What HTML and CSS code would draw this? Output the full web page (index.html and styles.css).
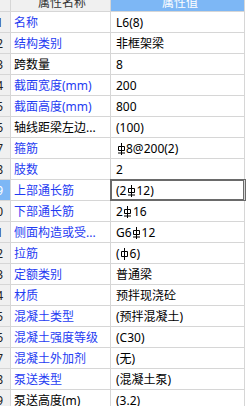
FILE: index.html
```html
<!DOCTYPE html>
<html lang="zh-CN">
<head>
<meta charset="utf-8">
<title>属性列表</title>
<link rel="stylesheet" href="styles.css">
</head>
<body>
<div class="grid">
  <div class="row head">
    <div class="idx hcell"></div>
    <div class="name hcell"><span class="htext">属性名称</span></div>
    <div class="val hcell hval"><span class="htext">属性值</span></div>
  </div>

  <div class="row"><div class="idx">1</div><div class="name blue">名称</div><div class="val">L6(8)</div></div>
  <div class="row"><div class="idx">2</div><div class="name blue">结构类别</div><div class="val">非框架梁</div></div>
  <div class="row"><div class="idx">3</div><div class="name">跨数量</div><div class="val">8</div></div>
  <div class="row"><div class="idx">4</div><div class="name blue">截面宽度(mm)</div><div class="val">200</div></div>
  <div class="row"><div class="idx">5</div><div class="name blue">截面高度(mm)</div><div class="val">800</div></div>
  <div class="row"><div class="idx">6</div><div class="name">轴线距梁左边...</div><div class="val">(100)</div></div>
  <div class="row"><div class="idx">7</div><div class="name blue">箍筋</div><div class="val"><svg class="sym" viewBox="0 0 9 12" aria-label="HRB400"><path d="M4.5 0V12M1.5 3.5H7.5V7.5H1.5ZM1 10H8" /></svg>8@200(2)</div></div>
  <div class="row"><div class="idx">8</div><div class="name blue">肢数</div><div class="val">2</div></div>
  <div class="row sel"><div class="idx">9</div><div class="name blue">上部通长筋</div><div class="val edit">(2<svg class="sym" viewBox="0 0 9 12" aria-label="HRB400"><path d="M4.5 0V12M1.5 3.5H7.5V7.5H1.5ZM1 10H8" /></svg>12)</div></div>
  <div class="row"><div class="idx">10</div><div class="name blue">下部通长筋</div><div class="val">2<svg class="sym" viewBox="0 0 9 12" aria-label="HRB400"><path d="M4.5 0V12M1.5 3.5H7.5V7.5H1.5ZM1 10H8" /></svg>16</div></div>
  <div class="row"><div class="idx">11</div><div class="name blue">侧面构造或受...</div><div class="val">G6<svg class="sym" viewBox="0 0 9 12" aria-label="HRB400"><path d="M4.5 0V12M1.5 3.5H7.5V7.5H1.5ZM1 10H8" /></svg>12</div></div>
  <div class="row"><div class="idx">12</div><div class="name blue">拉筋</div><div class="val">(<svg class="sym" viewBox="0 0 9 12" aria-label="HPB300"><path d="M4.5 0V12M1.5 3.5H7.5V8.5H1.5Z" /></svg>6)</div></div>
  <div class="row"><div class="idx">13</div><div class="name blue">定额类别</div><div class="val">普通梁</div></div>
  <div class="row"><div class="idx">14</div><div class="name blue">材质</div><div class="val">预拌现浇砼</div></div>
  <div class="row"><div class="idx">15</div><div class="name blue">混凝土类型</div><div class="val">(预拌混凝土)</div></div>
  <div class="row"><div class="idx">16</div><div class="name blue">混凝土强度等级</div><div class="val">(C30)</div></div>
  <div class="row"><div class="idx">17</div><div class="name blue">混凝土外加剂</div><div class="val">(无)</div></div>
  <div class="row"><div class="idx">18</div><div class="name blue">泵送类型</div><div class="val">(混凝土泵)</div></div>
  <div class="row"><div class="idx">19</div><div class="name">泵送高度(m)</div><div class="val">(3.2)</div></div>
</div>
</body>
</html>
```

FILE: styles.css
```css
html, body {
  margin: 0;
  padding: 0;
  background: #ffffff;
  overflow: hidden;
}

body {
  font-family: "Noto Sans", "Noto Sans CJK SC", sans-serif;
  font-size: 12px;
  color: #000000;
}

.grid {
  width: 245px;
  display: flex;
  flex-direction: column;
}

.row {
  display: grid;
  grid-template-columns: 11px 100px 134px;
  height: 21px;
  box-sizing: border-box;
  border-bottom: 1px solid #d6d6d6;
}

.row > div {
  box-sizing: border-box;
  border-right: 1px solid #d6d6d6;
  overflow: hidden;
  white-space: nowrap;
  display: flex;
  align-items: center;
  line-height: 20px;
  padding-top: 1px;
}

.head {
  height: 12px;
}

.head > div.hcell {
  align-items: flex-end;
  justify-content: center;
  padding-top: 0;
  background: #f0f0f0;
  color: #333333;
}

.head > div.hval {
  background: #7db7f5;
  color: #ffffff;
}

.htext {
  line-height: 12px;
  margin-bottom: 2px;
}

.idx {
  background: #f0f0f0;
  color: #222222;
  justify-content: flex-end;
  padding-right: 7px;
  font-size: 12px;
}

.sel .idx {
  background: #7db7f5;
  color: #ffffff;
}

.name {
  padding-left: 3px;
}

.blue {
  color: #1f3cf2;
}

.val {
  padding-left: 5px;
}

.edit {
  outline: 1px solid #6a6a6a;
  box-shadow: inset 0 0 0 1px #6a6a6a;
}

.sym {
  width: 9px;
  height: 12px;
  flex: none;
  fill: none;
  stroke: #000000;
  stroke-width: 1;
  margin: 0 0.5px;
}
```
